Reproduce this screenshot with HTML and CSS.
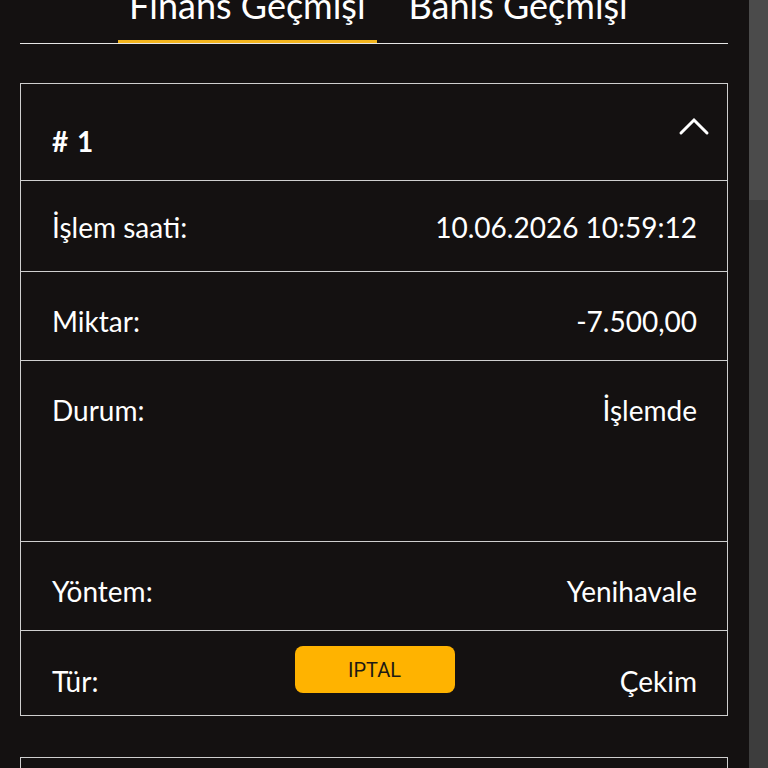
FILE: index.html
```html
<!DOCTYPE html>
<html lang="tr">
<head>
<meta charset="utf-8">
<title>Finans Geçmişi</title>
<link rel="stylesheet" href="styles.css">
</head>
<body>
<div class="page">
  <main class="content">
    <nav class="tabs">
      <div class="tab tab-active">Finans Geçmişi</div>
      <div class="tab">Bahis Geçmişi</div>
    </nav>

    <section class="card">
      <header class="card-head">
        <span class="card-title"># 1</span>
        <svg class="chevron" width="32" height="22" viewBox="0 0 32 22" aria-hidden="true">
          <polyline points="3,18 16,5 29,18" fill="none" stroke="#ffffff" stroke-width="3" stroke-linecap="round" stroke-linejoin="miter"/>
        </svg>
      </header>
      <div class="row row-time">
        <span class="label">İşlem saati:</span>
        <span class="value">10.06.2026 10:59:12</span>
      </div>
      <div class="row">
        <span class="label">Miktar:</span>
        <span class="value">-7.500,00</span>
      </div>
      <div class="row row-tall">
        <span class="label">Durum:</span>
        <span class="value">İşlemde</span>
      </div>
      <div class="row">
        <span class="label">Yöntem:</span>
        <span class="value">Yenihavale</span>
      </div>
      <div class="row row-type">
        <span class="label">Tür:</span>
        <button class="cancel-btn" type="button">IPTAL</button>
        <span class="value">Çekim</span>
      </div>
    </section>

    <section class="card card-next"></section>
  </main>
  <div class="scrollbar">
    <div class="scroll-thumb"></div>
  </div>
</div>
</body>
</html>
```

FILE: styles.css
```css
html, body {
  margin: 0;
  padding: 0;
  height: 100%;
  background: #141111;
  overflow: hidden;
}

body {
  font-family: Lato, "Open Sans", sans-serif;
  color: #ffffff;
}

.page {
  display: flex;
  height: 768px;
  overflow: hidden;
}

.content {
  flex: 1;
  padding: 0 21px 0 20px;
  min-width: 0;
}

.tabs {
  display: flex;
  gap: 21px;
  padding-left: 98px;
  margin-top: -16px;
  border-bottom: 1px solid #e6e6e6;
}

.tab {
  font-size: 36px;
  line-height: 43px;
  padding: 0 11px 13px;
  border-bottom: 3px solid transparent;
  white-space: nowrap;
}

.tab-active {
  border-bottom-color: #f2b51f;
}

.card {
  margin-top: 39px;
  border: 1px solid #cfcfcf;
}

.card-head {
  display: flex;
  justify-content: space-between;
  align-items: flex-start;
  height: 96px;
  padding: 0 17px 0 31px;
  border-bottom: 1px solid #cfcfcf;
}

.card-title {
  font-weight: 700;
  font-size: 28px;
  line-height: 32px;
  margin-top: 41px;
  word-spacing: 2px;
}

.chevron {
  margin-top: 31px;
}

.row {
  display: flex;
  justify-content: space-between;
  align-items: flex-start;
  height: 88px;
  padding: 0 30px 0 31px;
  border-top: 1px solid #cfcfcf;
  font-size: 28px;
  line-height: 32px;
}

.card-head + .row {
  border-top: none;
}

.row .label,
.row .value {
  margin-top: 33px;
}

.row-time {
  height: 90px;
}

.row-time .label,
.row-time .value {
  margin-top: 30px;
}

.row-tall {
  height: 180px;
}

.row-type {
  display: grid;
  grid-template-columns: 1fr auto 1fr;
  height: 84px;
}

.row-type .value {
  justify-self: end;
  margin-top: 34px;
}

.row-type .label {
  margin-top: 34px;
}

.cancel-btn {
  margin-top: 15px;
  width: 160px;
  height: 47px;
  border: none;
  border-radius: 8px;
  background: #ffb300;
  color: #1d1a14;
  font-family: Roboto, "Liberation Sans", sans-serif;
  font-size: 20px;
  padding: 0;
}

.card-next {
  margin-top: 41px;
  height: 60px;
}

.scrollbar {
  width: 19px;
  flex: none;
  background: #3d3d3d;
}

.scroll-thumb {
  height: 200px;
  background: #4b4b4b;
}
```
